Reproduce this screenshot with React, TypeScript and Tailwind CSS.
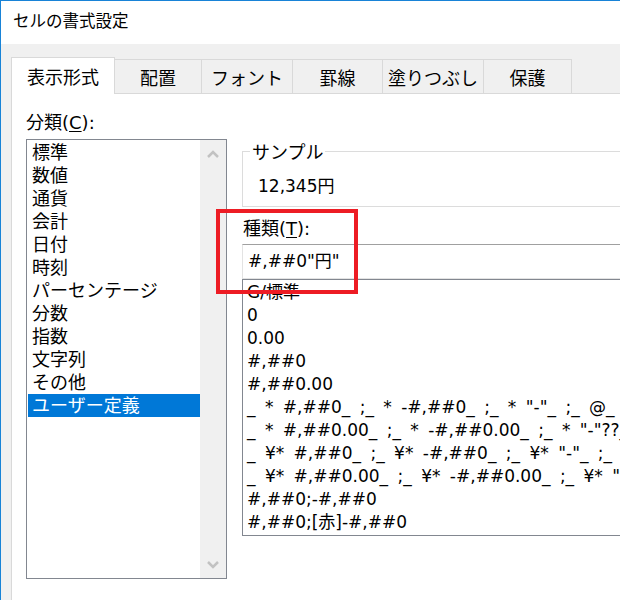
const categories = [
  "標準",
  "数値",
  "通貨",
  "会計",
  "日付",
  "時刻",
  "パーセンテージ",
  "分数",
  "指数",
  "文字列",
  "その他",
  "ユーザー定義",
];

const formats = [
  "G/標準",
  "0",
  "0.00",
  "#,##0",
  "#,##0.00",
  '_ * #,##0_ ;_ * -#,##0_ ;_ * "-"_ ;_ @_ ',
  '_ * #,##0.00_ ;_ * -#,##0.00_ ;_ * "-"??_ ;_ @_ ',
  '_ ¥* #,##0_ ;_ ¥* -#,##0_ ;_ ¥* "-"_ ;_ @_ ',
  '_ ¥* #,##0.00_ ;_ ¥* -#,##0.00_ ;_ ¥* "-"??_ ;_ @_ ',
  "#,##0;-#,##0",
  "#,##0;[赤]-#,##0",
];

const tabs = [
  { label: "配置", w: "w-[87px]" },
  { label: "フォント", w: "w-[91px]" },
  { label: "罫線", w: "w-[90px]" },
  { label: "塗りつぶし", w: "w-[101px]" },
  { label: "保護", w: "w-[88px]" },
];

function Chevron({ up }: { up?: boolean }) {
  return (
    <svg width="12" height="8" viewBox="0 0 12 8" className="text-[#c2c2c2]">
      <path
        d={up ? "M1 7 L6 2 L11 7" : "M1 1 L6 6 L11 1"}
        fill="none"
        stroke="currentColor"
        strokeWidth="2.5"
      />
    </svg>
  );
}

export default function App() {
  return (
    <div className="relative w-[620px] h-[600px] overflow-hidden border-l border-t border-[#1883d7] bg-[#f0f0f0] flex flex-col text-black font-['DejaVu_Sans','Noto_Sans_CJK_JP',sans-serif]">
      {/* title bar */}
      <div className="h-[43px] shrink-0 bg-white flex items-center pl-[12px] text-[16.5px]">
        セルの書式設定
      </div>

      {/* tabs */}
      <div className="mt-[13px] ml-[10px] h-[37px] shrink-0 flex items-end text-[18px]">
        <div className="relative z-10 w-[104px] h-[37px] bg-white border-l border-t border-r border-[#d9d9d9] flex items-center justify-center pt-[2px]">
          表示形式
        </div>
        {tabs.map((t) => (
          <div
            key={t.label}
            className={`${t.w} h-[35px] bg-[#f0f0f0] border-t border-r border-[#d9d9d9] flex items-center justify-center pt-[2px]`}
          >
            {t.label}
          </div>
        ))}
      </div>

      {/* panel */}
      <div className="-mt-px ml-[10px] flex-1 bg-white border-l border-t border-[#d9d9d9] flex pl-[14px] pt-[17px] text-[18px] leading-[23px]">
        <div className="w-[201px] shrink-0 flex flex-col">
          <div>
            分類(<span className="underline underline-offset-2">C</span>):
          </div>
          <div className="mt-[5px] h-[440px] border border-[#828790] flex pl-[1px] pt-[1px]">
            <div className="w-[172px]">
              {categories.map((c, i) => (
                <div
                  key={c}
                  className={
                    i === categories.length - 1
                      ? "h-[23px] px-[4px] bg-[#0078d7] text-white"
                      : "h-[23px] px-[4px]"
                  }
                >
                  {c}
                </div>
              ))}
            </div>
            <div className="flex-1 -mt-px bg-[#f0f0f0] flex flex-col items-center justify-between pt-[10px] pb-[9px]">
              <Chevron up />
              <Chevron />
            </div>
          </div>
        </div>

        <div className="ml-[15px] w-[420px] shrink-0 flex flex-col">
          <div className="relative mt-[40px] h-[56px] border border-[#dcdcdc]">
            <div className="absolute left-[7px] top-[-11px] bg-white px-[2px]">サンプル</div>
            <div className="pl-[15px] pt-[23px] text-[17px]">12,345円</div>
          </div>

          <div className="mt-[10px] pl-[1px]">
            種類(<span className="underline underline-offset-2">T</span>):
          </div>
          <div className="mt-[4px] h-[35px] border border-[#e3e3e3] border-t-[#a0a0a0] flex items-center pl-[5px] text-[17px]">
            #,##0"円"
          </div>
          <div className="h-[257px] border border-[#828790] pl-[4px] pt-[1px] overflow-hidden text-[17px] [word-spacing:4px]">
            {formats.map((f) => (
              <div key={f} className="h-[23px] whitespace-pre">
                {f}
              </div>
            ))}
          </div>
        </div>
      </div>

      {/* red highlight */}
      <div className="absolute left-[215px] top-[208px] w-[142px] h-[85px] border-4 border-[#ed1c24]" />
    </div>
  );
}
